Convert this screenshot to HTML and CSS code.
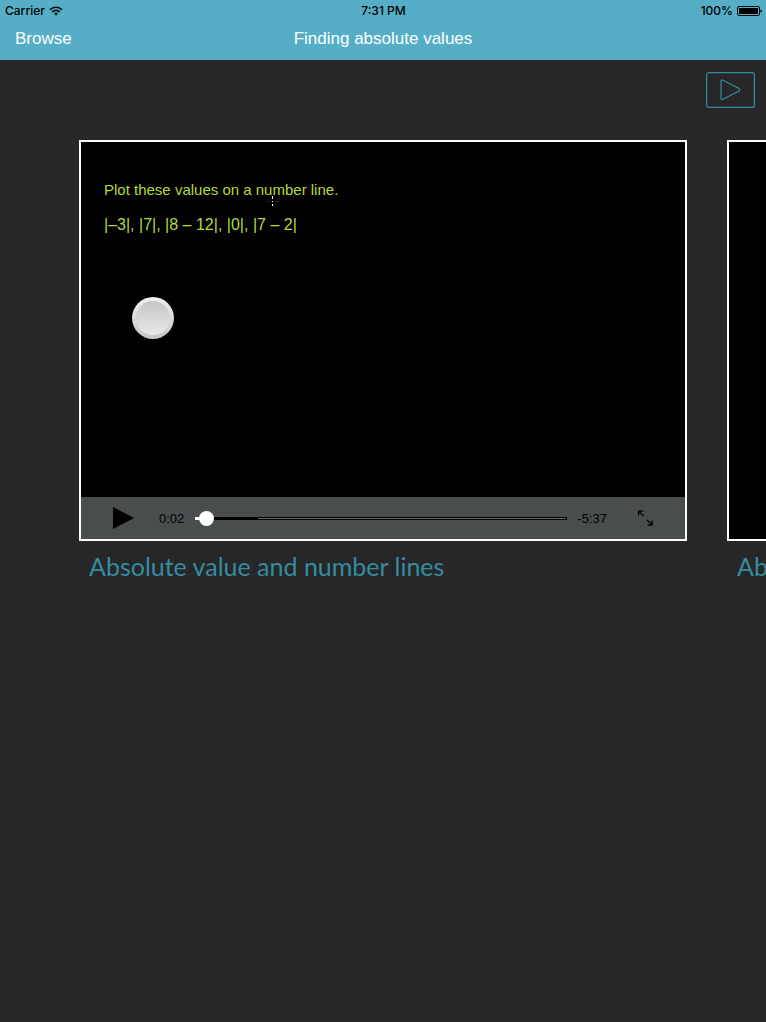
FILE: index.html
```html
<!DOCTYPE html>
<html lang="en">
<head>
<meta charset="utf-8">
<meta name="viewport" content="width=device-width, initial-scale=1">
<title>Finding absolute values</title>
<link rel="stylesheet" href="styles.css">
</head>
<body>
<header class="top">
  <div class="status">
    <div class="status-side">
      <span>Carrier</span>
      <svg class="wifi" width="14" height="10" viewBox="0 0 14 10" fill="none" stroke="#000" stroke-width="1.7" aria-hidden="true">
        <path d="M1 3.7C4.4.4 9.6.4 13 3.7"/>
        <path d="M3.2 6C5.4 3.9 8.6 3.9 10.8 6"/>
        <path d="M7 9.6 4.9 7.4C6.2 6.3 7.8 6.3 9.1 7.4Z" fill="#000" stroke="none"/>
      </svg>
    </div>
    <span>7:31 PM</span>
    <div class="status-side status-right">
      <span>100%</span>
      <svg width="25" height="10" viewBox="0 0 25 10" aria-hidden="true">
        <rect x=".5" y=".5" width="22" height="9" rx="1.5" fill="none" stroke="#000"/>
        <rect x="2" y="2" width="19" height="6" fill="#000"/>
        <path d="M23.5 3.2Q25 3.8 25 5T23.5 6.8Z"/>
      </svg>
    </div>
  </div>
  <nav class="nav">
    <a class="back" href="#browse">Browse</a>
    <h1 class="title">Finding absolute values</h1>
  </nav>
</header>
<main>
  <div class="tools">
    <button class="play-all" type="button" aria-label="Play all">
      <svg width="49" height="36" viewBox="0 0 49 36" fill="none" stroke="#358ca1" stroke-width="1.2" aria-hidden="true">
        <rect x=".6" y=".6" width="47.8" height="34.8" rx="2.5"/>
        <path d="M15 9.5Q15 7.3 17 8.2L32.7 16.2Q35 17.7 32.7 19.2L17 27.3Q15 28.2 15 26Z"/>
      </svg>
    </button>
  </div>
  <div class="carousel">
    <section class="slide">
      <div class="player">
        <div class="screen">
          <p>Plot these values on a number line.</p>
          <p class="values">|–3|, |7|, |8 – 12|, |0|, |7 – 2|</p>
          <svg class="cursor" width="11" height="11" viewBox="0 0 11 11" aria-hidden="true">
            <path d="M5.5 0V3M5.5 5V6M5.5 8V10" stroke="#fff"/>
            <path d="M0 5.5H4M7 5.5H11" stroke="#222"/>
          </svg>
          <span class="knob"></span>
        </div>
        <div class="controls">
          <button class="play" type="button" aria-label="Play">
            <svg width="21" height="22" viewBox="0 0 21 22" aria-hidden="true"><path d="M0 0 21 11 0 22Z"/></svg>
          </button>
          <span class="time">0:02</span>
          <input class="seek" type="range" min="0" max="339" value="3" aria-label="Seek">
          <span class="time left">-5:37</span>
          <button class="full" type="button" aria-label="Full screen">
            <svg width="16" height="16" viewBox="0 0 16 16" fill="none" stroke="#000" stroke-width="1.3" aria-hidden="true">
              <path d="M1.6 5.4V1.2H6.2M1.8 1.4 6.6 6M9.8 9.8 14.6 14.4M10.6 15H15.2V10.6"/>
            </svg>
          </button>
        </div>
      </div>
      <h2 class="caption">Absolute value and number lines</h2>
    </section>
    <section class="slide">
      <div class="player"></div>
      <h2 class="caption">Absolute value</h2>
    </section>
  </div>
</main>
</body>
</html>
```
FILE: styles.css
```css
* { box-sizing: border-box; }

body {
  margin: 0;
  min-height: 100vh;
  background: #272727;
  font-family: "Liberation Sans", Arial, sans-serif;
}

h1, h2, p { margin: 0; font-weight: 400; }

button {
  display: flex;
  padding: 0;
  border: 0;
  background: none;
}

.top { background: #55aec6; }

.status {
  display: flex;
  height: 22px;
  align-items: center;
  padding: 0 4px 0 5px;
  font: 500 12px/22px Inter, sans-serif;
}

.status-side {
  display: flex;
  flex: 1;
  align-items: center;
  gap: 4px;
}

.status-right { justify-content: flex-end; }

.nav {
  display: grid;
  grid-template-columns: 1fr auto 1fr;
  height: 38px;
  padding: 0 15px;
  color: #fff;
  font-size: 17px;
  line-height: 34px;
}

.back { color: inherit; text-decoration: none; }

.title { font-size: 17px; }

.tools {
  display: flex;
  justify-content: flex-end;
  padding: 12px 11px 32px;
}

.carousel {
  display: flex;
  gap: 40px;
  padding-left: 79px;
  overflow: hidden;
}

.slide { flex: 0 0 calc(100vw - 158px); }

.player {
  display: flex;
  flex-direction: column;
  aspect-ratio: 608 / 401;
  border: 2px solid #fff;
  background: #000;
}

.screen {
  position: relative;
  flex: 1;
  padding: 30px 23px;
  color: #b5d83c;
  font-size: 15px;
  line-height: 35px;
}

.values { font-size: 16px; }

.cursor { position: absolute; left: 186px; top: 54px; }

.knob {
  position: absolute;
  left: 51px;
  top: 155px;
  width: 42px;
  height: 42px;
  border: 4px solid transparent;
  border-radius: 50%;
  background:
    linear-gradient(#c6c6c6, #e8e8e8) padding-box,
    linear-gradient(#f0f0f0, #c6c6c6) border-box;
}

.controls {
  display: flex;
  height: 42px;
  align-items: center;
  padding: 0 32px;
  background: #4a4d4e;
}

.play { margin-right: 25px; }

.time { font-size: 13px; }

.seek {
  flex: 1;
  min-width: 0;
  height: 16px;
  margin: 0 10px 0 11px;
  appearance: none;
  background: none;
}

.seek::-webkit-slider-runnable-track {
  height: 3px;
  border: 1px solid #000;
  background: linear-gradient(90deg, #fff 3%, #000 3% 17%, #686b6c 17%) border-box;
  border-image: linear-gradient(90deg, #fff 3%, #000 3%) 1;
}

.seek::-webkit-slider-thumb {
  width: 15px;
  height: 15px;
  margin-top: -7px;
  appearance: none;
  border-radius: 50%;
  background: #fff;
}

.left { margin-right: 30px; }

.caption {
  padding: 8px 10px;
  color: #358ca1;
  font: 400 25px/34px Lato, sans-serif;
  white-space: nowrap;
}
```
